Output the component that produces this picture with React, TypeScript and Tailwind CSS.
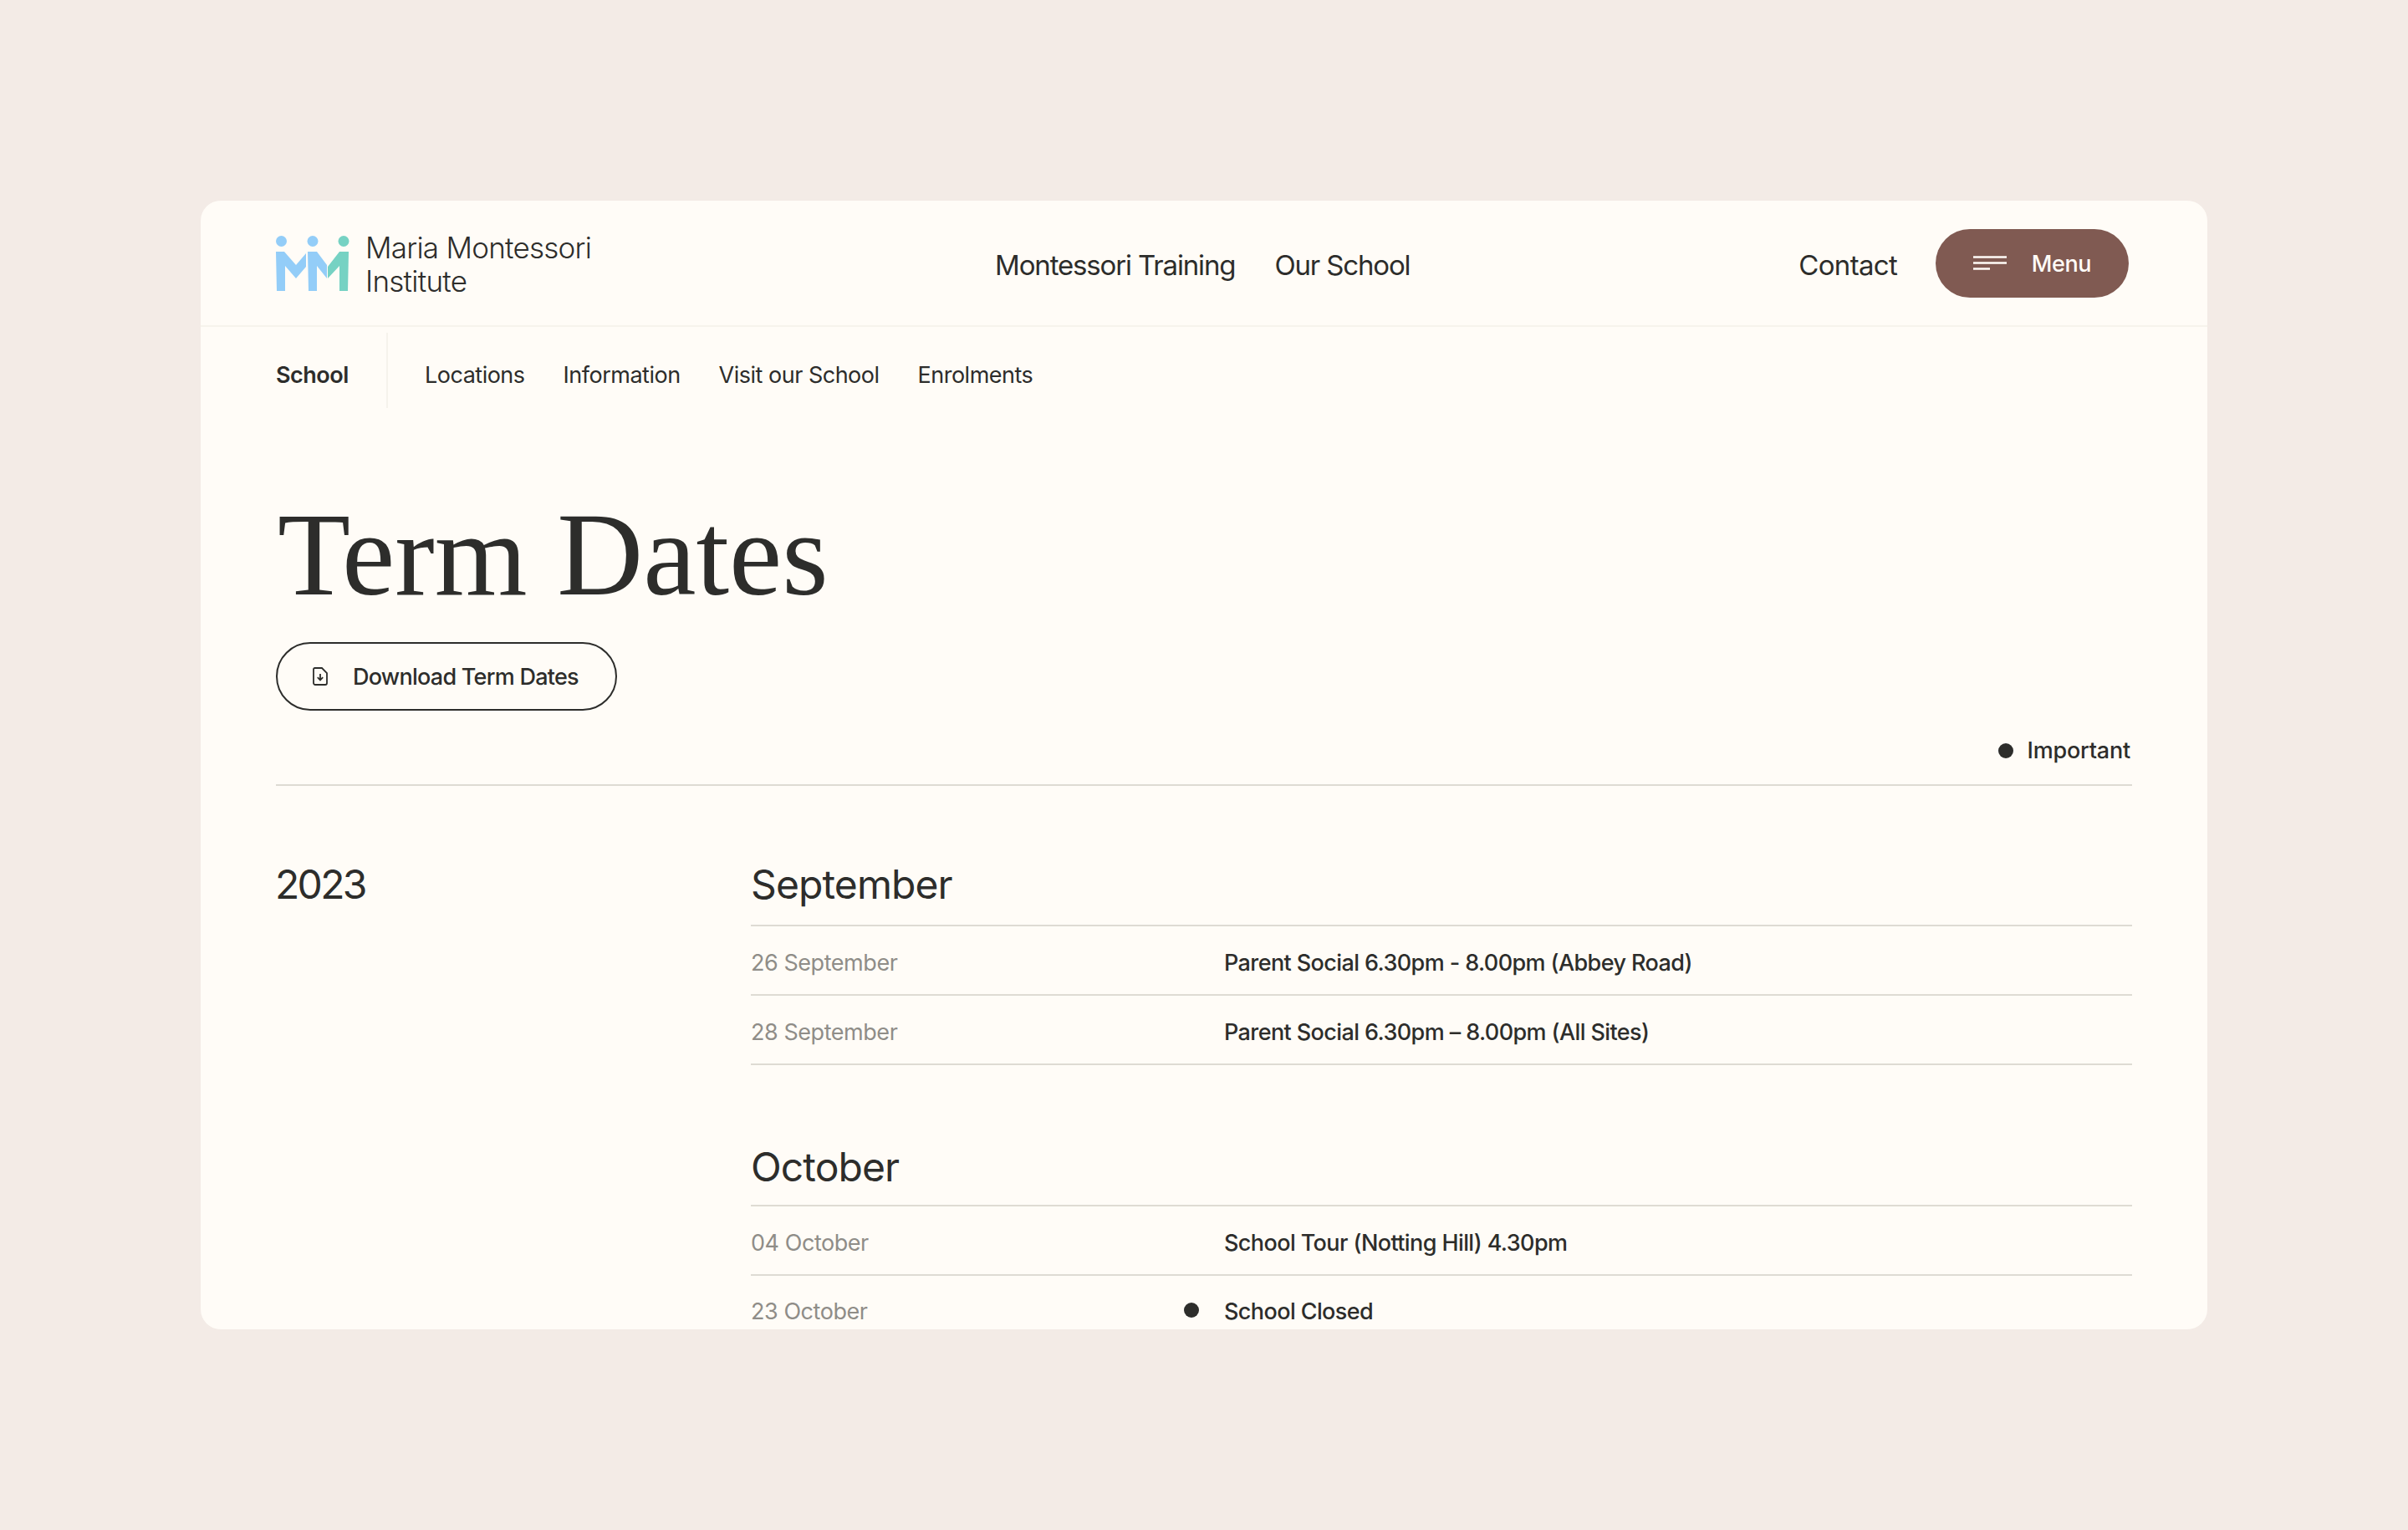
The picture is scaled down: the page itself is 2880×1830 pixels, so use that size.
const sans = "font-['Inter','Liberation_Sans',sans-serif]";

function Logo() {
  return (
    <svg width="88" height="66" viewBox="0 0 88 66" className="shrink-0">
      <circle cx="6.5" cy="6.5" r="6.5" fill="#93cdf8" />
      <circle cx="44" cy="6.5" r="6.5" fill="#93cdf8" />
      <circle cx="81" cy="6.5" r="6.5" fill="#76d2c3" />
      <path d="M0 19 L10 19 L24 35 L36 21 L36 37 L24 51 L11 36 L11 66 L1 66 Z" fill="#93cdf8" />
      <path d="M38 19 L49 19 L61 35 L61 51 L49 36 L49 66 L39 66 Z" fill="#93cdf8" />
      <path d="M62 37 L76 19 L87 19 L86 66 L76 66 L76 36 L62 51 Z" fill="#76d2c3" />
    </svg>
  );
}

function Row({ date, text, dot, last, pad }: { date: string; text: string; dot?: boolean; last?: boolean; pad?: string }) {
  return (
    <div className={`flex h-[83px] items-center ${pad ?? "pt-[7px]"} ${last ? "" : "border-b-2 border-[#dedbd3]"}`}>
      <div className="relative flex h-full w-[566px] items-center text-[27px] tracking-[-0.45px] text-[#8f8d88]">
        {date}
        {dot && <span className="absolute left-[518px] top-[28px] size-[18px] rounded-full bg-[#2d2d2b]" />}
      </div>
      <div className="text-[27px] font-medium tracking-[-0.6px] text-[#2d2d2b]">{text}</div>
    </div>
  );
}

function Month({ name, pad, children }: { name: string; pad: string; children: React.ReactNode }) {
  return (
    <section>
      <h2 className={`h-[90px] border-b-2 border-[#dedbd3] text-[48px] leading-[56px] tracking-[-0.9px] text-[#2d2d2b] ${pad}`}>{name}</h2>
      {children}
    </section>
  );
}

export default function App() {
  return (
    <div className={`${sans} h-[1830px] w-full bg-[#f3ebe6] px-[240px] py-[240px] text-[#2d2d2b]`}>
      <div className="h-[1350px] w-[2400px] overflow-hidden rounded-[24px] bg-[#fffcf7]">
        <header className="flex h-[151px] items-center border-b-2 border-[#f6f3ec] pl-[90px] pr-[94px]">
          <div className="flex w-[860px] items-center gap-[19px]">
            <Logo />
            <div className="pt-[2px] text-[35px] font-light leading-[40px] tracking-[-0.75px] text-[#2d2d2b]">Maria Montessori<br />Institute</div>
          </div>
          <nav className="flex gap-[47px] pt-[6px] text-[33px] tracking-[-1.15px]">
            <span>Montessori Training</span>
            <span>Our School</span>
          </nav>
          <div className="ml-auto flex items-center gap-[46px]">
            <span className="pt-[6px] text-[33px] tracking-[-0.7px]">Contact</span>
            <button className="flex h-[82px] w-[231px] items-center justify-center gap-[30px] rounded-full bg-[#805a52] text-[27px] font-medium tracking-[-0.4px] text-[#fffcf7]">
              <svg width="40" height="18" viewBox="0 0 40 18">
                <path d="M0 1.5H40M0 8.5H40M0 15.5H20" stroke="#fffcf7" strokeWidth="2.4" />
              </svg>
              <span className="pt-[3px]">Menu</span>
            </button>
          </div>
        </header>
        <div className="flex h-[98px] items-center pl-[90px] pt-[6px] text-[27px] tracking-[-0.5px]">
          <span className="flex h-[90px] w-[134px] items-center border-r-2 border-[#f6f3ec] pt-[12px] font-semibold">School</span>
          <div className="flex gap-[46px] pl-[44px] pt-[12px]">
            <span>Locations</span>
            <span>Information</span>
            <span>Visit our School</span>
            <span>Enrolments</span>
          </div>
        </div>
        <main className="px-[90px]">
          <h1 className="ml-[2px] mt-[104px] font-['Liberation_Serif',serif] text-[142.5px] leading-[140px] text-[#2d2d2b]">Term Dates</h1>
          <button className="mt-[35px] flex h-[82px] w-[408px] items-center gap-[30px] rounded-full border-2 border-[#2d2d2b] pl-[42px] text-[27px] font-medium tracking-[-0.75px]">
            <svg width="18" height="22" viewBox="0 0 18 22" fill="none" stroke="#2d2d2b" strokeWidth="1.8">
              <path d="M2.5 1h8.5l6 6v12a2 2 0 0 1-2 2H3a2 2 0 0 1-2-2V2.5A1.5 1.5 0 0 1 2.5 1z" />
              <path d="M9 8v7M5.8 12.2 9 15.4l3.2-3.2" />
            </svg>
            <span className="pt-[2px]">Download Term Dates</span>
          </button>
          <div className="flex h-[90px] items-center justify-end gap-[16px] border-b-2 border-[#dedbd3] pr-[2px] pt-[8px] text-[27px] font-medium tracking-[-0.2px]">
            <span className="size-[18px] rounded-full bg-[#2d2d2b]" />
            <span>Important</span>
          </div>
          <div className="flex pt-[78px]">
            <div className="-ml-[1px] mt-[12px] w-[569px] text-[48px] leading-[56px] tracking-[-2.7px]">2023</div>
            <div className="flex-1">
              <Month name="September" pad="pt-[12px]">
                <Row date="26 September" text="Parent Social 6.30pm - 8.00pm (Abbey Road)" />
                <Row date="28 September" text="Parent Social 6.30pm – 8.00pm (All Sites)" />
              </Month>
              <div className="h-[79px]" />
              <Month name="October" pad="pt-[15px]">
                <Row date="04 October" text="School Tour (Notting Hill) 4.30pm" />
                <Row date="23 October" text="School Closed" dot last pad="pt-[4px]" />
              </Month>
            </div>
          </div>
        </main>
      </div>
    </div>
  );
}
